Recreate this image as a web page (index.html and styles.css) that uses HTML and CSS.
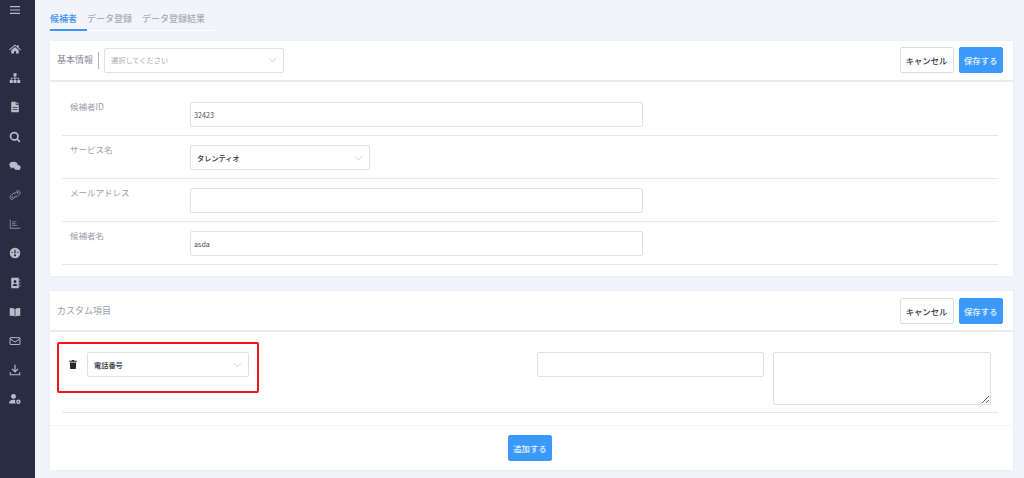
FILE: index.html
```html
<!DOCTYPE html>
<html lang="ja">
<head>
<meta charset="utf-8">
<title>候補者</title>
<link rel="stylesheet" href="styles.css">
</head>
<body>
<div class="app">
  <nav class="sidebar">
    <svg class="menu" viewBox="0 0 12 12"><path d="M1 2h10v1.200H1zM1 5.400h10v1.200H1zM1 8.800h10V10H1z"/></svg>
    <ul class="nav">
      <li><svg viewBox="0 0 16 16"><path d="M8 2 0 8.600l.8 1L8 3.800l7.200 5.800.8-1L13 6.200V3h-2v1.600zM3 9.600V14h3.600v-3h2.800v3H13V9.600L8 5.400z"/></svg></li>
      <li><svg viewBox="0 0 16 16"><path d="M6 1.500h4v4H8.600v2H13.500V10.500H15V14.500H11V10.500H12.500V8.800H8.600V10.500H10V14.500H6V10.500H7.400V8.800H3.500V10.500H5V14.500H1V10.500H2.500V7.500H7.400V5.500H6z"/></svg></li>
      <li><svg viewBox="0 0 16 16"><path fill-rule="evenodd" d="M3 1h6v4h4v10H3zM10 1l3 3h-3zM5 8v1h6V8zm0 2.500v1h6v-1z"/></svg></li>
      <li><svg viewBox="0 0 16 16"><path fill-rule="evenodd" d="M7 1a6 6 0 1 0 3.400 10.900l3.300 3.300 1.600-1.600-3.300-3.300A6 6 0 0 0 7 1zm0 2.200a3.800 3.800 0 1 1 0 7.600 3.800 3.800 0 0 1 0-7.600z"/></svg></li>
      <li><svg viewBox="0 0 16 16"><ellipse cx="6" cy="6.200" rx="5.500" ry="4"/><path d="M2.500 9 2 11.500 5 10z"/><ellipse cx="11" cy="10" rx="4.500" ry="3.300"/><path d="M13 12l1.500 2-.2-2.800z"/></svg></li>
      <li class="dim"><svg viewBox="0 0 16 16"><path fill="none" stroke="currentColor" stroke-width="1.300" d="M7.500 5.500 10 3a2.800 2.800 0 0 1 4 4l-2.500 2.500a2.800 2.800 0 0 1-4 0M8.500 10.500 6 13a2.800 2.800 0 0 1-4-4l2.500-2.500a2.800 2.800 0 0 1 4 0"/><circle cx="11.300" cy="5" r="1.300"/><circle cx="4.500" cy="10.800" r="1.300"/></svg></li>
      <li class="dim"><svg viewBox="0 0 16 16"><path d="M1 2h1.200v11H15v1.200H1zM4 9.500h7v1.200H4zM4 7h4.500v1.200H4zM4 4.500h6v1.200H4z"/></svg></li>
      <li><svg viewBox="0 0 16 16"><path fill-rule="evenodd" d="M8 1a7 7 0 1 1 0 14A7 7 0 0 1 8 1zM7.200 3.500v5.200h1.600V3.500zM4.200 6.300a.9.900 0 1 0 0 1.800.9.900 0 0 0 0-1.800zm7.600 0a.9.900 0 1 0 0 1.800.9.900 0 0 0 0-1.800zM8 9.500a1.500 1.500 0 1 0 0 3 1.500 1.500 0 0 0 0-3z"/></svg></li>
      <li><svg viewBox="0 0 16 16"><path fill-rule="evenodd" d="M3 1h10v14H3zM8 4a2 2 0 1 0 0 4 2 2 0 0 0 0-4zM5 12h6c0-2-1.300-3-3-3s-3 1-3 3z"/><path d="M14 3h1v2h-1zM14 7h1v2h-1zM14 11h1v2h-1z"/></svg></li>
      <li><svg viewBox="0 0 16 16"><path d="M1 3c2.500-.6 4.800-.3 6.500 1v10C5.800 13 3.500 12.700 1 13.200zM15 3c-2.500-.6-4.800-.3-6.500 1v10c1.700-1 4-1.300 6.500-.8z"/></svg></li>
      <li><svg viewBox="0 0 16 16"><path fill="none" stroke="currentColor" stroke-width="1.300" d="M2 3.500h12a.6.600 0 0 1 .6.600v8a.6.600 0 0 1-.6.600H2a.6.600 0 0 1-.6-.6v-8a.6.600 0 0 1 .6-.6zM1.600 5 8 9.500 14.400 5"/></svg></li>
      <li><svg viewBox="0 0 16 16"><path d="M7.200 1h1.600v7.500l2.500-2.500 1.100 1.100L8 11.500 3.600 7.100 4.700 6l2.500 2.500zM1 11h1.500v2.500h11V11H15v4H1z"/></svg></li>
      <li><svg viewBox="0 0 16 16"><circle cx="6" cy="4.500" r="3.300"/><path d="M0 14c0-3.500 2.500-5 6-5 1 0 1.800.1 2.500.4A4 4 0 0 0 9 14z"/><path fill-rule="evenodd" d="M12.500 8.500a3 3 0 1 1 0 6 3 3 0 0 1 0-6zm0 2a1 1 0 1 0 0 2 1 1 0 0 0 0-2z"/></svg></li>
    </ul>
  </nav>
  <main class="main">
    <div class="tabs">
      <span class="tab active">候補者</span>
      <span class="tab">データ登録</span>
      <span class="tab">データ登録結果</span>
    </div>

    <section class="card">
      <header class="card-head">
        <div class="head-left">
          <span class="card-title bar">基本情報</span>
          <div class="select select-head placeholder"><span>選択してください</span><svg class="chev" viewBox="0 0 10 6"><path d="M1 1l4 4 4-4"/></svg></div>
        </div>
        <div class="actions">
          <button class="btn">キャンセル</button>
          <button class="btn primary">保存する</button>
        </div>
      </header>
      <div class="form">
        <div class="row"><label class="label">候補者ID</label><div class="input wide">32423</div></div>
        <div class="row"><label class="label">サービス名</label><div class="select select-mid"><span>タレンティオ</span><svg class="chev" viewBox="0 0 10 6"><path d="M1 1l4 4 4-4"/></svg></div></div>
        <div class="row"><label class="label">メールアドレス</label><div class="input wide"></div></div>
        <div class="row"><label class="label">候補者名</label><div class="input wide">asda</div></div>
      </div>
    </section>

    <section class="card second">
      <header class="card-head">
        <span class="card-title">カスタム項目</span>
        <div class="actions">
          <button class="btn">キャンセル</button>
          <button class="btn primary">保存する</button>
        </div>
      </header>
      <div class="custom">
        <div class="custom-row">
          <svg class="trash" viewBox="0 0 12 14"><path d="M4.300 0h3.400l.6 1H12v1.700H0V1h3.700zM1 3.700h10L10.300 14H1.700z"/></svg>
          <div class="select select-custom"><span>電話番号</span><svg class="chev" viewBox="0 0 10 6"><path d="M1 1l4 4 4-4"/></svg></div>
          <div class="input value"></div>
          <textarea class="note"></textarea>
          <div class="highlight"></div>
        </div>
      </div>
      <footer class="card-foot"><button class="btn primary">追加する</button></footer>
    </section>
  </main>
</div>
</body>
</html>
```

FILE: styles.css
```css
* { box-sizing: border-box; }
html, body { margin: 0; height: 478px; overflow: hidden; }
body {
  background: #f3f4f9;
  font-family: "Noto Sans CJK JP", "Noto Sans", sans-serif;
  font-size: 8px;
  color: #33363d;
}
.app { display: flex; height: 478px; }

.sidebar {
  width: 35px;
  flex: none;
  background: #292d44;
  color: #b9bcc8;
  display: flex;
  flex-direction: column;
  align-items: center;
  padding: 4px 5px 0 0;
}
.sidebar svg { display: block; fill: currentColor; }
.menu { width: 12px; height: 12px; }
.nav { list-style: none; margin: 25px 0 0; padding: 0; }
.nav li { height: 29.2px; display: flex; justify-content: center; align-items: flex-start; padding-top: 2px; }
.nav svg { width: 12px; height: 12px; }
.nav .dim { color: #8b8fa2; }

.main { flex: 1; min-width: 0; padding: 10px 11px 0 15px; }

.tabs {
  display: flex;
  width: 165px;
  height: 21px;
  border-bottom: 1px solid #fff;
  font-size: 9px;
  line-height: 17px;
  color: #a9adb8;
  white-space: nowrap;
}
.tab { padding-right: 10px; height: 21px; font-weight: 500; }
.tab:last-child { padding-right: 0; }
.tab.active {
  color: #3a95f7;
  border-bottom: 2px solid #3a95f7;
}

.card { background: #fff; margin-top: 10px; box-shadow: 0 0 3px rgba(40, 45, 70, .05); }
.card.second { margin-top: 15px; }
.card-head {
  height: 41px;
  padding: 6px 10px 0 7px;
  display: flex;
  justify-content: space-between;
  align-items: flex-start;
  border-bottom: 2px solid #e9eaee;
}
.second .card-head { padding-top: 7px; }
.head-left { display: flex; align-items: center; }
.card-title { font-size: 9px; color: #9a9da8; line-height: 26px; }
.card-title.bar { color: #85889a; display: flex; align-items: center; }
.card-title.bar::after { content: ""; width: 1px; height: 17px; background: #aeb1bb; margin: 0 5px 0 5px; }
.actions { display: flex; gap: 5px; }

.btn {
  height: 26px;
  padding: 0 5px;
  font: 500 8.4px/1 "Noto Sans CJK JP", sans-serif;
  color: #33363d;
  background: #fff;
  border: 1px solid #dcdee3;
  border-radius: 2px;
  white-space: nowrap;
}
.btn.primary { color: #e6f2ff; background: #3a99fb; border-color: #3a99fb; padding: 0 4.5px; }

.select, .input {
  height: 25px;
  background: #fff;
  border: 1px solid #dfe1e6;
  border-radius: 2px;
  display: flex;
  align-items: center;
}
.select { justify-content: space-between; padding: 0 6px; color: #2f3238; font-size: 7.2px; font-weight: 500; }
.input { padding: 0 0 0 3px; color: #4a4d55; font-size: 7.2px; }
.chev { width: 9px; height: 6px; fill: none; stroke: #c4c6cd; stroke-width: .9; }
.placeholder { color: #a9acb5; font-weight: 400; }
.select-head { width: 180px; }
.select-mid { width: 180px; }
.select-custom { width: 162px; flex: none; }

.form { padding: 11px 15px 11px 12px; }
.row {
  height: 43px;
  padding-top: 9px;
  display: flex;
  border-bottom: 1px solid #e6e7eb;
}
.label { width: 128px; flex: none; padding: 0 0 0 8px; font-size: 8.5px; line-height: 8px; color: #9a9da8; }
.wide { width: 453px; }

.custom { padding: 20px 15px 0 12px; }
.custom-row {
  position: relative;
  height: 61px;
  border-bottom: 1px solid #e6e7eb;
  display: flex;
  align-items: flex-start;
}
.trash { width: 8px; height: 9px; margin: 8px 10px 0 7px; fill: #23262f; flex: none; }
.value { width: 227px; flex: none; margin-left: 288px; }
.note {
  width: 218px;
  height: 53px;
  flex: none;
  margin-left: 9px;
  border: 1px solid #dfe1e6;
  border-radius: 2px;
  background: #fff;
  display: block;
  outline: none;
}
.highlight {
  position: absolute;
  left: -5px;
  top: -10px;
  width: 202px;
  height: 51px;
  border: 2px solid #f5141c;
  border-radius: 2px;
}
.card-foot {
  margin-top: 12px;
  border-top: 1px solid #f3f4f7;
  height: 45px;
  display: flex;
  justify-content: center;
  padding: 9px 3px 0 0;
}
```
